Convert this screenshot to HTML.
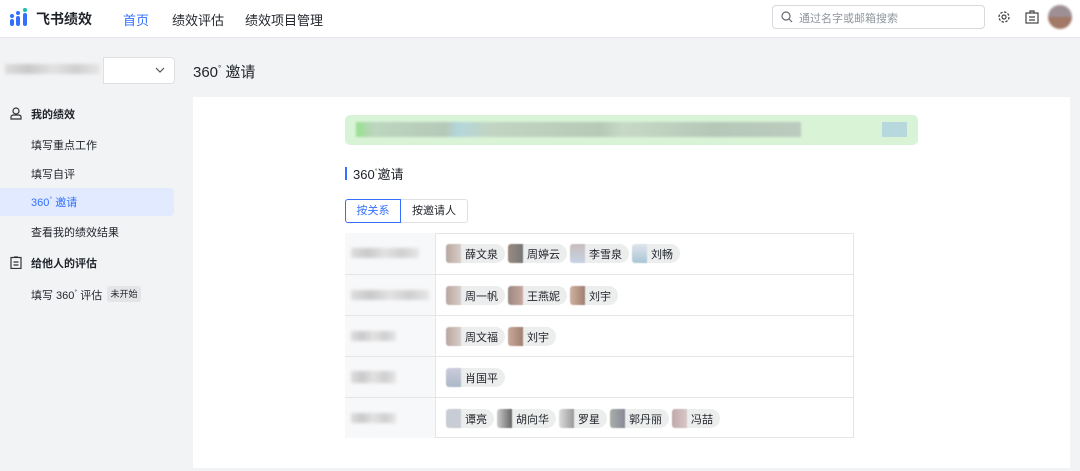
<!DOCTYPE html><html><head><meta charset="utf-8"><style>
*{margin:0;padding:0;box-sizing:border-box}
body{width:1080px;height:471px;overflow:hidden;background:#f2f3f5;font-family:"Liberation Sans","Noto Sans CJK SC",sans-serif;color:#1f2329;font-size:12px;position:relative}
.a{position:absolute}
.hdr{left:0;top:0;width:1080px;height:38px;background:#fff;border-bottom:1px solid #e6e7ea}
.nav{top:10px;font-size:13px;color:#1f2329}
.side{font-size:11px;color:#1f2329}
.blur{background:linear-gradient(90deg,#ddd,#c9c9c9,#e2e2e2,#cfcfcf,#e6e6e6);filter:blur(1.5px)}
.row{left:345px;width:509px;height:41px;border-top:1px solid #e4e5e7}
.cell1{position:absolute;left:0;top:0;width:91px;height:100%;background:#f7f8fa;border-right:1px solid #e4e5e7}
.chips{position:absolute;left:101px;top:11px;display:flex;gap:3px}
.chip{height:19px;background:#eceded;border-radius:10px;padding:0 7px 0 0;display:flex;align-items:center;font-size:11px;color:#1f2329}
.chip i{display:block;width:15px;height:19px;border-radius:3px 0 0 3px;margin-right:4px;background:linear-gradient(90deg,#b9a79f,#d7cdc8);filter:blur(.5px)}
</style></head><body>
<div class="a hdr"></div>
<svg class="a" style="left:9px;top:7px" width="24" height="20" viewBox="0 0 24 20"><circle cx="3" cy="9" r="2" fill="#3370ff"/><rect x="1" y="12" width="4" height="7" rx="2" fill="#3370ff"/><circle cx="9" cy="6" r="2" fill="#3370ff"/><rect x="7" y="9" width="4" height="10" rx="2" fill="#3370ff"/><circle cx="16" cy="3" r="2" fill="#14c0aa"/><rect x="14" y="6" width="4" height="13" rx="2" fill="#3370ff"/></svg>
<div class="a" style="left:36px;top:9px;font-size:14px;font-weight:bold">飞书绩效</div>
<div class="a nav" style="left:123px;color:#3370ff">首页</div>
<div class="a nav" style="left:172px">绩效评估</div>
<div class="a nav" style="left:245px">绩效项目管理</div>
<div class="a" style="left:772px;top:5px;width:213px;height:24px;border:1px solid #d7d9dc;border-radius:4px;background:#fff"></div>
<svg class="a" style="left:781px;top:11px" width="12" height="12" viewBox="0 0 12 12"><circle cx="5" cy="5" r="4" fill="none" stroke="#646a73" stroke-width="1.2"/><path d="M8 8l3 3" stroke="#646a73" stroke-width="1.2"/></svg>
<div class="a" style="left:799px;top:10px;font-size:11px;color:#8f959e">通过名字或邮箱搜索</div>
<svg class="a" style="left:997px;top:10px" width="14" height="14" viewBox="0 0 14 14"><circle cx="7" cy="7" r="5" fill="none" stroke="#444" stroke-width="1.3" stroke-dasharray="2.5 1.4"/><circle cx="7" cy="7" r="2" fill="none" stroke="#444" stroke-width="1.2"/></svg>
<svg class="a" style="left:1025px;top:10px" width="14" height="14" viewBox="0 0 14 14"><rect x="1" y="3" width="12" height="10" fill="none" stroke="#444" stroke-width="1.2"/><path d="M5 3V1h4v2M4 7h6M4 10h6" stroke="#444" stroke-width="1.2" fill="none"/></svg>
<div class="a" style="left:1048px;top:5px;width:24px;height:24px;border-radius:12px;background:linear-gradient(180deg,#9d9095 0,#9d9095 50%,#a27866 50%);filter:blur(1px)"></div>
<div class="a" style="left:103px;top:57px;width:72px;height:27px;background:#fff;border:1px solid #dfe0e3;border-radius:0 4px 4px 0"></div>
<div class="a blur" style="left:5px;top:64px;width:95px;height:10px"></div>
<svg class="a" style="left:155px;top:66px" width="10" height="8"><path d="M1 2l4 4 4-4" stroke="#555" fill="none" stroke-width="1.2"/></svg>
<div class="a" style="left:193px;top:61px;font-size:15px">360<sup style="font-size:8px">°</sup> 邀请</div>
<svg class="a" style="left:10px;top:107px" width="12" height="13" viewBox="0 0 12 13"><circle cx="6" cy="4" r="3" fill="none" stroke="#333" stroke-width="1.2"/><path d="M1 12v-2c0-1.5 1.5-2 3-2h4c1.5 0 3 .5 3 2v2z" fill="none" stroke="#333" stroke-width="1.2"/></svg>
<div class="a side" style="left:31px;top:106px;font-weight:bold">我的绩效</div>
<div class="a side" style="left:31px;top:137px">填写重点工作</div>
<div class="a side" style="left:31px;top:166px">填写自评</div>
<div class="a" style="left:0;top:188px;width:174px;height:28px;background:#e1eaff;border-radius:0 4px 4px 0"></div>
<div class="a side" style="left:31px;top:194px;color:#3370ff">360<sup style="font-size:7px">°</sup> 邀请</div>
<div class="a side" style="left:31px;top:224px">查看我的绩效结果</div>
<svg class="a" style="left:10px;top:256px" width="12" height="13" viewBox="0 0 12 13"><rect x="1" y="1.5" width="10" height="11" fill="none" stroke="#333" stroke-width="1.2"/><path d="M4 1h4M3.5 6h5M3.5 9h5" stroke="#333" stroke-width="1.2"/></svg>
<div class="a side" style="left:31px;top:255px;font-weight:bold">给他人的评估</div>
<div class="a side" style="left:31px;top:287px">填写 360<sup style="font-size:7px">°</sup> 评估</div>
<div class="a" style="left:107px;top:286px;width:34px;height:16px;background:#e4e5e7;border-radius:3px;font-size:9px;line-height:16px;text-align:center">未开始</div>
<div class="a" style="left:193px;top:97px;width:877px;height:371px;background:#fff"></div>
<div class="a" style="left:345px;top:115px;width:573px;height:30px;background:#d9f3d6;border-radius:5px"></div>
<div class="a" style="left:356px;top:122px;width:445px;height:15px;background:linear-gradient(90deg,#98e090 0,#bcd6bf 4%,#b6c9b8 20%,#b4d6dc 23%,#c2d5c3 30%,#b6cab7 55%,#c7d9c6 60%,#b5c8b8 80%,#bcccbe 100%);filter:blur(1px)"></div>
<div class="a" style="left:882px;top:122px;width:25px;height:15px;background:#b7d8dc"></div>
<div class="a" style="left:345px;top:167px;width:2px;height:13px;background:#3370ff"></div>
<div class="a" style="left:353px;top:164px;font-size:13px">360<sup style="font-size:7px">°</sup>邀请</div>
<div class="a" style="left:345px;top:199px;width:56px;height:24px;border:1px solid #3370ff;border-radius:3px 0 0 3px;color:#3370ff;font-size:11px;text-align:center;line-height:22px">按关系</div>
<div class="a" style="left:401px;top:199px;width:67px;height:24px;border:1px solid #dee0e3;border-left:none;border-radius:0 3px 3px 0;font-size:11px;text-align:center;line-height:22px">按邀请人</div>
<div class="a" style="left:345px;top:233px;width:509px;height:205px;border:1px solid #e4e5e7"></div>
<div class="a row" style="top:233px;border-top:none"><div class="cell1"><div class="blur" style="position:absolute;left:6px;top:15px;width:68px;height:10px"></div></div><div class="chips"><div class="chip"><i></i>薛文泉</div><div class="chip"><i style="background:linear-gradient(90deg,#9a8a80,#777)"></i>周婷云</div><div class="chip"><i style="background:linear-gradient(180deg,#c8bdbd,#c7d3e6)"></i>李雪泉</div><div class="chip"><i style="background:linear-gradient(180deg,#dfe4ec,#a9c6d6)"></i>刘畅</div></div></div>
<div class="a row" style="top:274px"><div class="cell1"><div class="blur" style="position:absolute;left:6px;top:15px;width:78px;height:10px"></div></div><div class="chips"><div class="chip"><i></i>周一帆</div><div class="chip"><i style="background:linear-gradient(90deg,#9a8a80,#c8a8a0)"></i>王燕妮</div><div class="chip"><i style="background:linear-gradient(90deg,#d0b0a0,#a08070)"></i>刘宇</div></div></div>
<div class="a row" style="top:315px"><div class="cell1"><div class="blur" style="position:absolute;left:6px;top:15px;width:45px;height:10px"></div></div><div class="chips"><div class="chip"><i></i>周文福</div><div class="chip"><i style="background:linear-gradient(90deg,#c8a898,#a08070)"></i>刘宇</div></div></div>
<div class="a row" style="top:356px"><div class="cell1"><div class="blur" style="position:absolute;left:6px;top:14px;width:45px;height:12px"></div></div><div class="chips"><div class="chip"><i style="background:linear-gradient(180deg,#ccd,#aab8c8)"></i>肖国平</div></div></div>
<div class="a row" style="top:397px"><div class="cell1"><div class="blur" style="position:absolute;left:6px;top:15px;width:45px;height:10px"></div></div><div class="chips"><div class="chip"><i style="background:#c8ccd4"></i>谭亮</div><div class="chip"><i style="background:linear-gradient(90deg,#ccc,#666)"></i>胡向华</div><div class="chip"><i style="background:linear-gradient(90deg,#ddd,#999)"></i>罗星</div><div class="chip"><i style="background:linear-gradient(90deg,#a8b0a8,#889)"></i>郭丹丽</div><div class="chip"><i style="background:linear-gradient(90deg,#c0a8a8,#d8c8c8)"></i>冯喆</div></div></div>
</body></html>
